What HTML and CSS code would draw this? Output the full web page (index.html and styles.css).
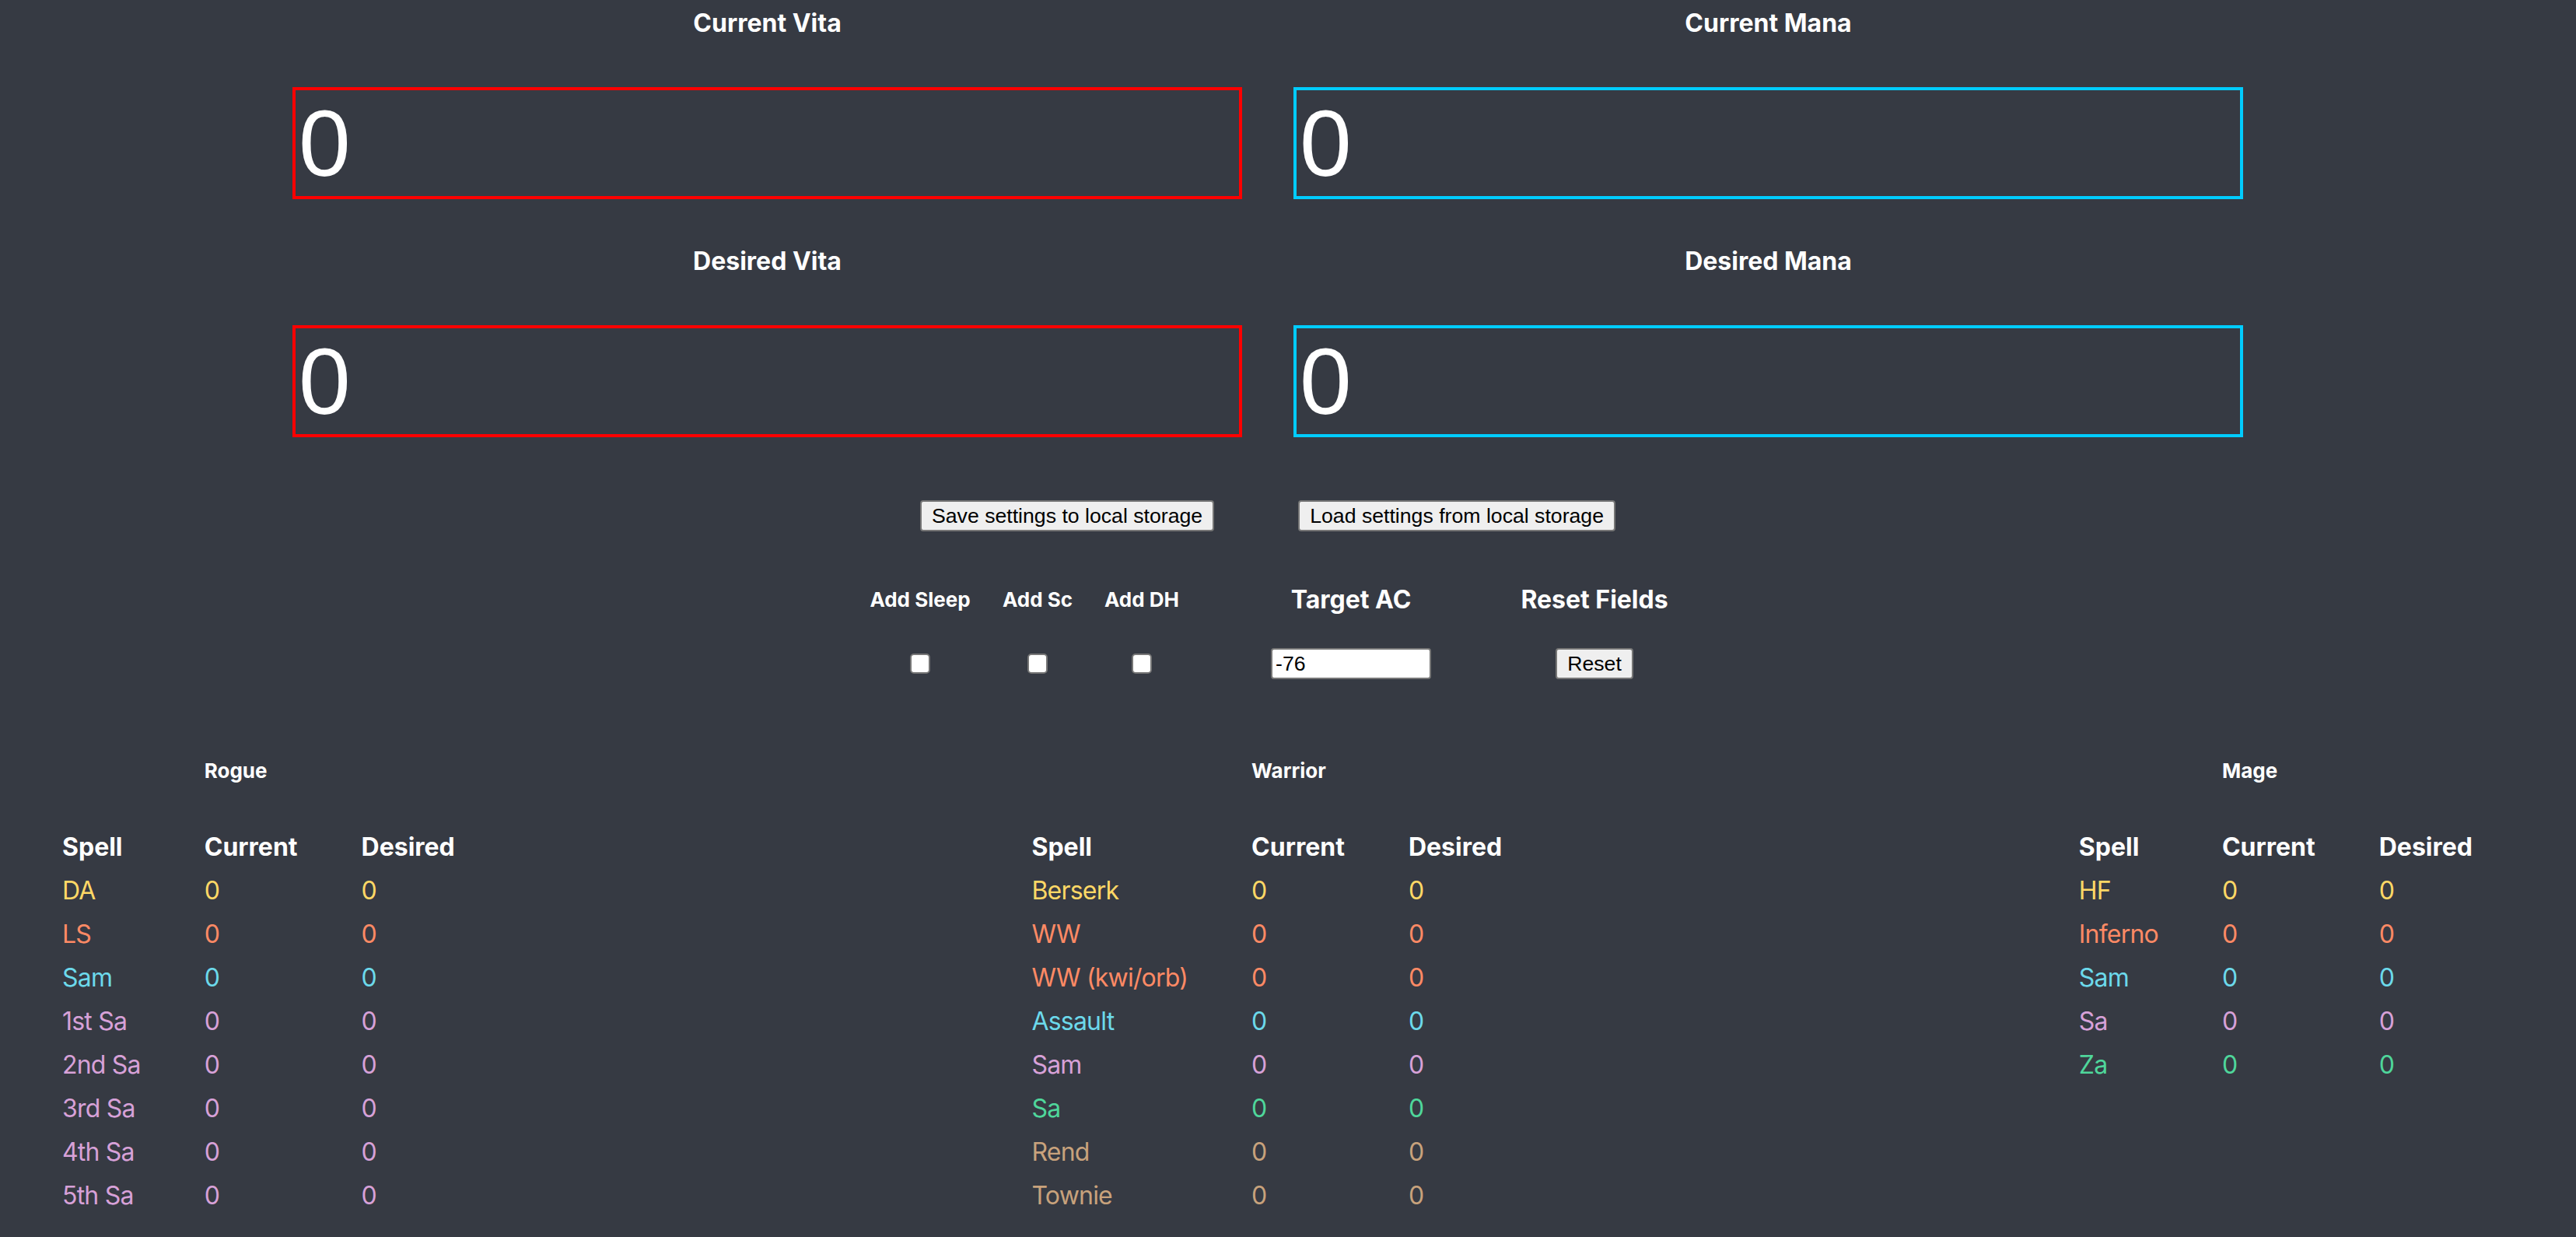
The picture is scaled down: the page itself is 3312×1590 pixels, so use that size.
FILE: index.html
```html
<!DOCTYPE html>
<html lang="en">
<head>
<meta charset="utf-8">
<title>Spell Calculator</title>
<link rel="stylesheet" href="styles.css">
</head>
<body>
<main class="page">
  <section class="stats">
    <div class="field">
      <h2 class="field-label">Current Vita</h2>
      <input class="big-input vita" type="text" value="0">
    </div>
    <div class="field">
      <h2 class="field-label">Current Mana</h2>
      <input class="big-input mana" type="text" value="0">
    </div>
    <div class="field">
      <h2 class="field-label">Desired Vita</h2>
      <input class="big-input vita" type="text" value="0">
    </div>
    <div class="field">
      <h2 class="field-label">Desired Mana</h2>
      <input class="big-input mana" type="text" value="0">
    </div>
  </section>

  <section class="storage">
    <button class="btn" type="button">Save settings to local storage</button>
    <button class="btn" type="button">Load settings from local storage</button>
  </section>

  <section class="options">
    <div class="opt opt-sleep">
      <span class="opt-label">Add Sleep</span>
      <div class="opt-ctrl"><input class="check" type="checkbox"></div>
    </div>
    <div class="opt opt-sc">
      <span class="opt-label">Add Sc</span>
      <div class="opt-ctrl"><input class="check" type="checkbox"></div>
    </div>
    <div class="opt opt-dh">
      <span class="opt-label">Add DH</span>
      <div class="opt-ctrl"><input class="check" type="checkbox"></div>
    </div>
    <div class="opt opt-ac">
      <span class="opt-label opt-label-lg">Target AC</span>
      <div class="opt-ctrl"><input class="ac-input" type="text" value="-76"></div>
    </div>
    <div class="opt opt-reset">
      <span class="opt-label opt-label-lg">Reset Fields</span>
      <div class="opt-ctrl"><button class="btn" type="button">Reset</button></div>
    </div>
  </section>

  <section class="classes">
    <table class="spells">
      <thead>
        <tr class="class-row"><th></th><th class="class-name">Rogue</th><th></th></tr>
        <tr class="head-row"><th>Spell</th><th>Current</th><th>Desired</th></tr>
      </thead>
      <tbody>
        <tr class="c-yellow"><td>DA</td><td>0</td><td>0</td></tr>
        <tr class="c-salmon"><td>LS</td><td>0</td><td>0</td></tr>
        <tr class="c-cyan"><td>Sam</td><td>0</td><td>0</td></tr>
        <tr class="c-plum"><td>1st Sa</td><td>0</td><td>0</td></tr>
        <tr class="c-plum"><td>2nd Sa</td><td>0</td><td>0</td></tr>
        <tr class="c-plum"><td>3rd Sa</td><td>0</td><td>0</td></tr>
        <tr class="c-plum"><td>4th Sa</td><td>0</td><td>0</td></tr>
        <tr class="c-plum"><td>5th Sa</td><td>0</td><td>0</td></tr>
      </tbody>
    </table>

    <table class="spells">
      <thead>
        <tr class="class-row"><th></th><th class="class-name">Warrior</th><th></th></tr>
        <tr class="head-row"><th>Spell</th><th>Current</th><th>Desired</th></tr>
      </thead>
      <tbody>
        <tr class="c-yellow"><td>Berserk</td><td>0</td><td>0</td></tr>
        <tr class="c-salmon"><td>WW</td><td>0</td><td>0</td></tr>
        <tr class="c-salmon"><td>WW (kwi/orb)</td><td>0</td><td>0</td></tr>
        <tr class="c-cyan"><td>Assault</td><td>0</td><td>0</td></tr>
        <tr class="c-plum"><td>Sam</td><td>0</td><td>0</td></tr>
        <tr class="c-green"><td>Sa</td><td>0</td><td>0</td></tr>
        <tr class="c-tan"><td>Rend</td><td>0</td><td>0</td></tr>
        <tr class="c-tan"><td>Townie</td><td>0</td><td>0</td></tr>
      </tbody>
    </table>

    <table class="spells">
      <thead>
        <tr class="class-row"><th></th><th class="class-name">Mage</th><th></th></tr>
        <tr class="head-row"><th>Spell</th><th>Current</th><th>Desired</th></tr>
      </thead>
      <tbody>
        <tr class="c-yellow"><td>HF</td><td>0</td><td>0</td></tr>
        <tr class="c-salmon"><td>Inferno</td><td>0</td><td>0</td></tr>
        <tr class="c-cyan"><td>Sam</td><td>0</td><td>0</td></tr>
        <tr class="c-plum"><td>Sa</td><td>0</td><td>0</td></tr>
        <tr class="c-green"><td>Za</td><td>0</td><td>0</td></tr>
      </tbody>
    </table>
  </section>
</main>
</body>
</html>
```

FILE: styles.css
```css
html, body {
  margin: 0;
  padding: 0;
  background: #363a43;
  color: #ffffff;
  font-family: Inter, "Noto Sans", sans-serif;
}

.page {
  display: flex;
  flex-direction: column;
}

/* ---------- top stat inputs ---------- */
.stats {
  display: grid;
  grid-template-columns: 1221px 1221px;
  column-gap: 66px;
  row-gap: 60px;
  justify-content: center;
  padding: 10px 52px 0 0;
}

.field {
  display: flex;
  flex-direction: column;
}

.field-label {
  margin: 0 0 62px;
  font-size: 32px;
  line-height: 40px;
  font-weight: 700;
  text-align: center;
}

.big-input {
  box-sizing: border-box;
  width: 100%;
  height: 144px;
  margin: 0;
  padding: 0 4px;
  border: 4px solid;
  background: transparent;
  color: #ffffff;
  font-family: "Liberation Sans", Arial, sans-serif;
  font-size: 120px;
  outline: none;
}

.vita { border-color: #ff0000; }
.mana { border-color: #00ccff; }

/* ---------- buttons ---------- */
.btn {
  box-sizing: border-box;
  height: 40px;
  margin: 0;
  padding: 0 13px;
  border: 2px solid #767676;
  border-radius: 4px;
  background: #efefef;
  color: #000000;
  font-family: "Liberation Sans", Arial, sans-serif;
  font-size: 26.67px;
  line-height: 36px;
}

.storage {
  display: flex;
  justify-content: center;
  gap: 108px;
  margin-top: 81px;
  padding-right: 52px;
}

/* ---------- options row ---------- */
.options {
  display: flex;
  justify-content: center;
  margin-top: 72px;
  padding-right: 52px;
}

.opt {
  display: flex;
  flex-direction: column;
  align-items: center;
}

.opt-sleep { width: 170px; }
.opt-sc { width: 132px; }
.opt-dh { width: 136px; }
.opt-ac { width: 402px; }
.opt-reset { width: 224px; }

.opt-label {
  font-size: 26px;
  line-height: 32px;
  font-weight: 700;
  white-space: nowrap;
}

.opt-label-lg { font-size: 32px; }

.opt-ctrl {
  height: 40px;
  margin-top: 46px;
  display: flex;
  align-items: center;
  justify-content: center;
}

.check {
  appearance: none;
  -webkit-appearance: none;
  box-sizing: border-box;
  width: 26px;
  height: 26px;
  margin: 0;
  border: 2px solid #767676;
  border-radius: 5px;
  background: #ffffff;
}

.ac-input {
  box-sizing: border-box;
  width: 206px;
  height: 40px;
  margin: 0;
  padding: 0 4px;
  border: 2px solid #767676;
  border-radius: 4px;
  background: #ffffff;
  color: #000000;
  font-family: "Liberation Sans", Arial, sans-serif;
  font-size: 26.67px;
  outline: none;
}

/* ---------- class spell tables ---------- */
.classes {
  display: flex;
  justify-content: space-between;
  align-items: flex-start;
  margin-top: 47px;
  padding: 0 51px 0 80px;
}

.spells {
  border-collapse: collapse;
  border-spacing: 0;
  font-size: 32px;
}

.spells th,
.spells td {
  padding: 0 82px 0 0;
  height: 56px;
  text-align: left;
  vertical-align: middle;
  white-space: nowrap;
}

.spells th { font-weight: 700; }
.spells td {
  font-weight: 400;
  letter-spacing: -0.8px;
}

.class-row th { height: 140px; }

.class-name { font-size: 26px; }

.c-yellow { color: #ffd866; }
.c-salmon { color: #ff8a65; }
.c-cyan { color: #6cd9eb; }
.c-plum { color: #d7a1d8; }
.c-green { color: #4fd69b; }
.c-tan { color: #c8a27c; }
```
